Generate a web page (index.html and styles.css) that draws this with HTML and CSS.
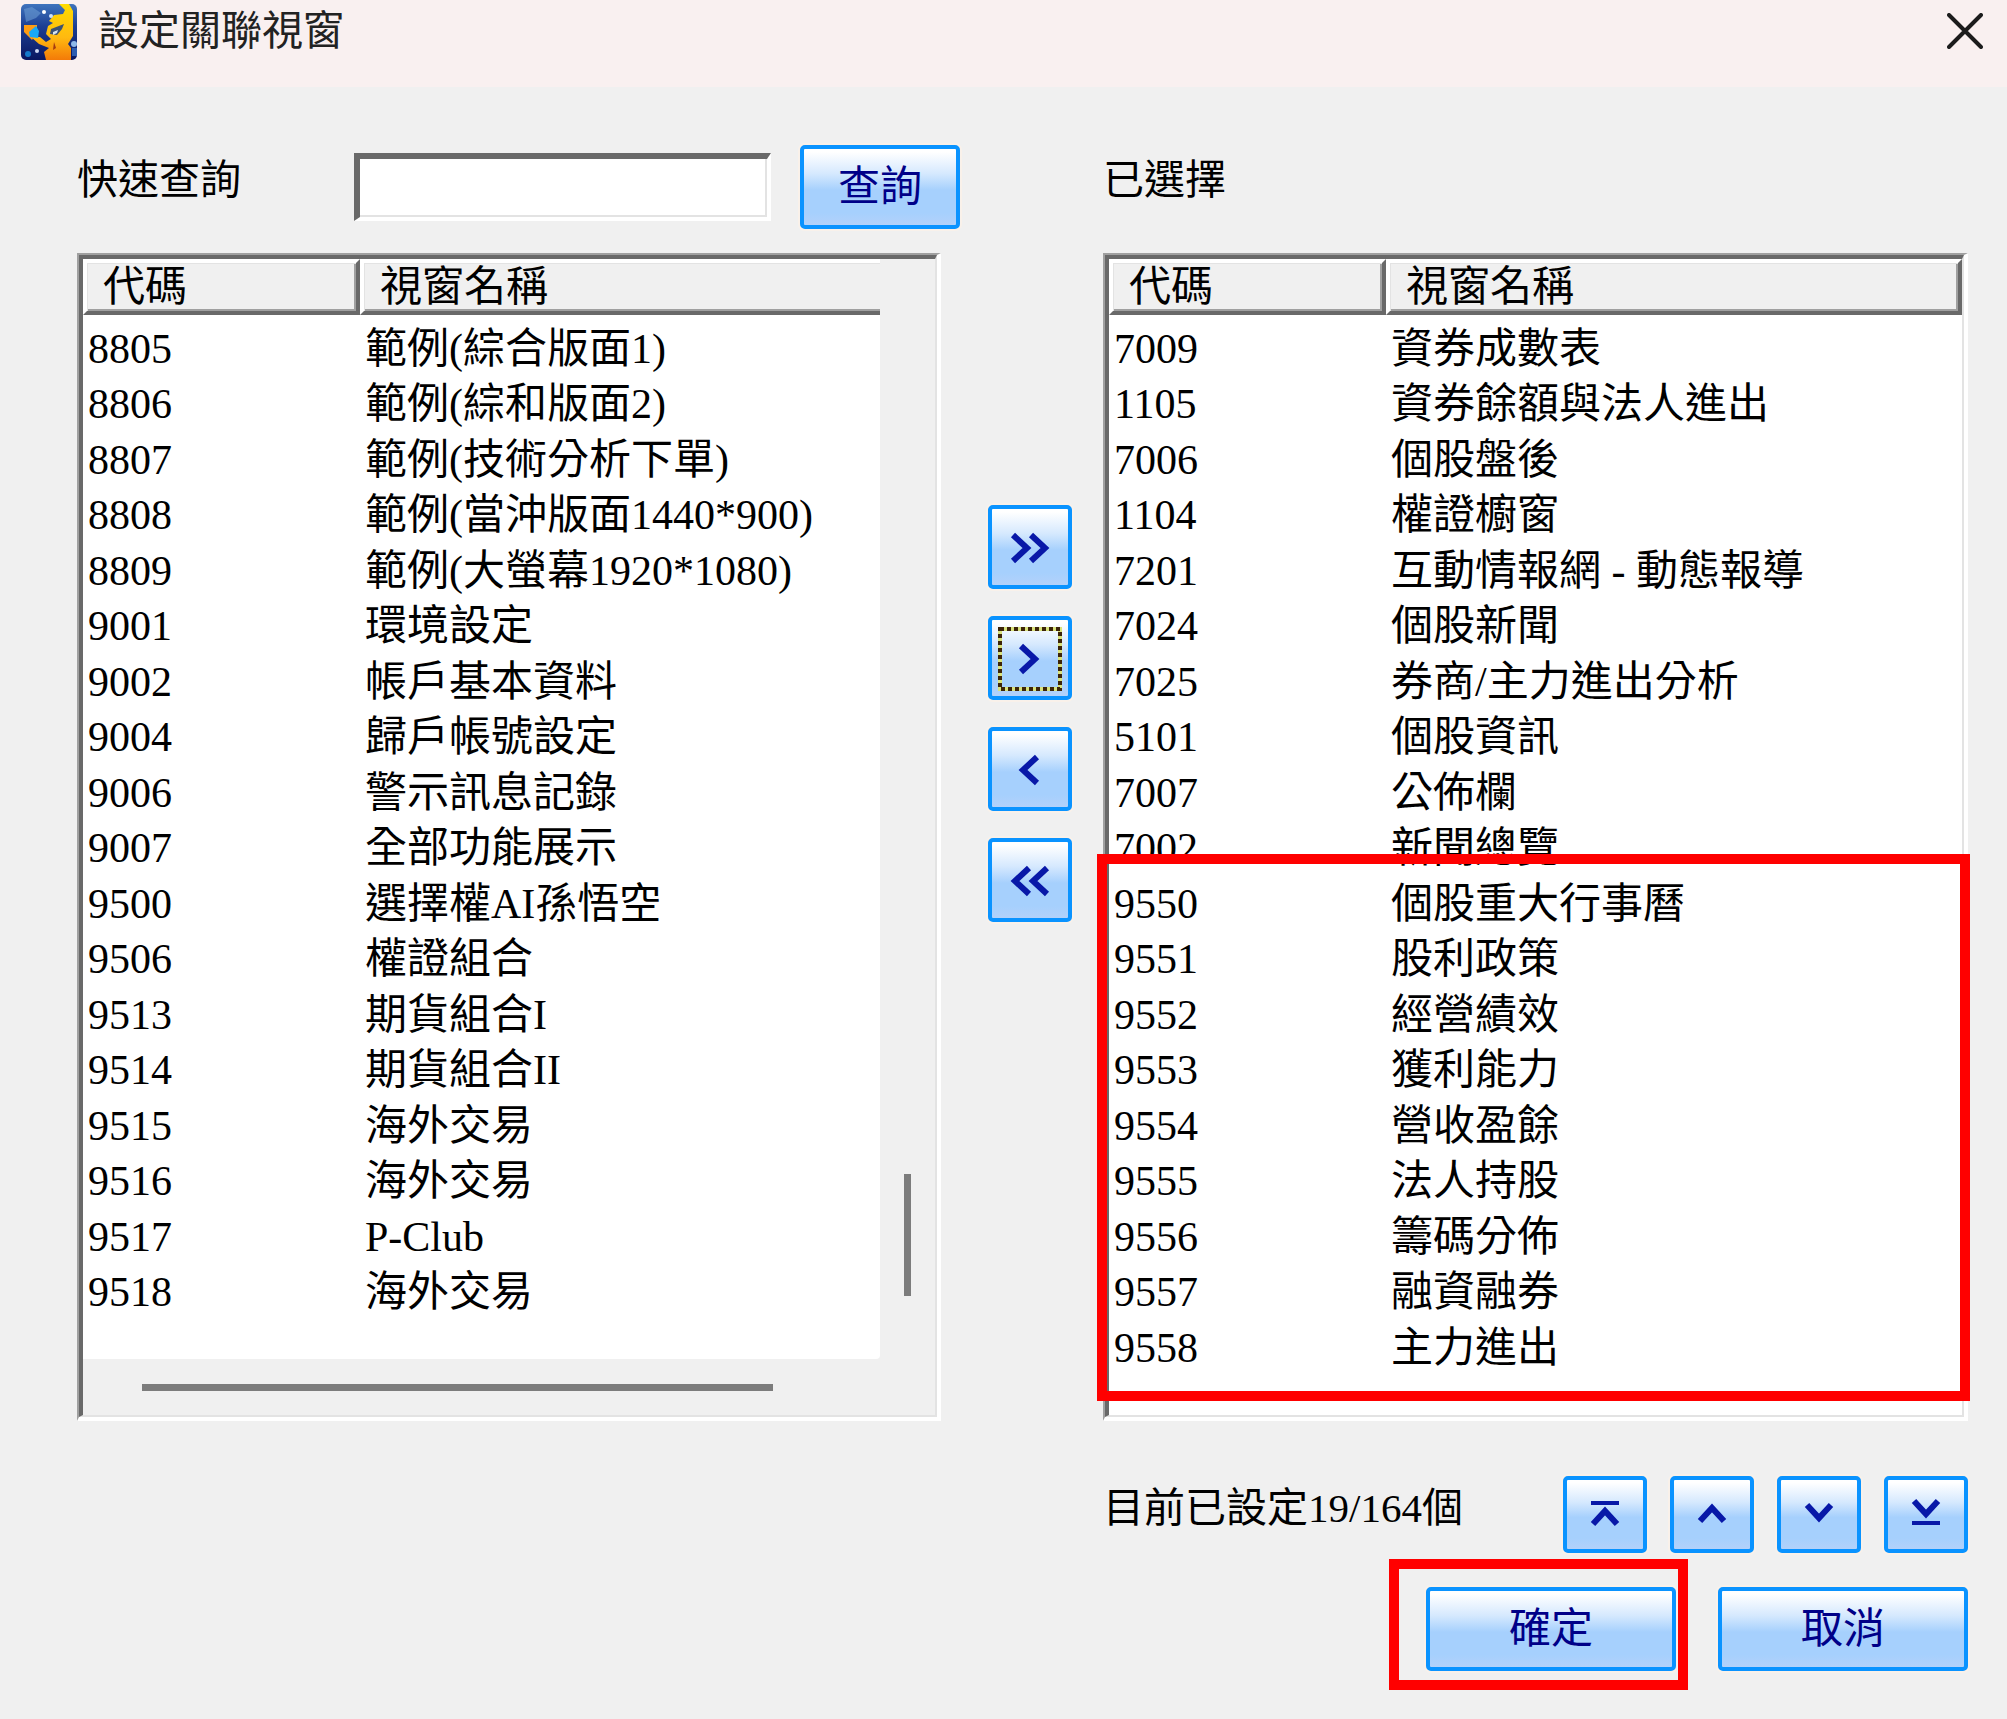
FILE: index.html
```html
<!DOCTYPE html>
<html lang="zh-Hant">
<head>
    <meta charset="UTF-8">
    <meta name="viewport" content="width=device-width, initial-scale=1.0">
    <title>設定關聯視窗</title>
    <link rel="stylesheet" href="styles.css">
</head>
<body>
<header class="titlebar">
    <svg class="app-icon" viewBox="0 0 56 56" aria-hidden="true">
        <defs>
            <linearGradient id="sky" x1="0" y1="0" x2="0" y2="1">
                <stop offset="0" stop-color="#3f74bd"/>
                <stop offset="0.4" stop-color="#1c3f93"/>
                <stop offset="1" stop-color="#0a1660"/>
            </linearGradient>
            <linearGradient id="moon" x1="0" y1="0" x2="0" y2="1">
                <stop offset="0" stop-color="#ffdc00"/>
                <stop offset="0.6" stop-color="#ffb910"/>
                <stop offset="1" stop-color="#f47a08"/>
            </linearGradient>
        </defs>
        <rect width="56" height="56" rx="5" fill="url(#sky)"/>
        <path d="M3 5l8-2 9 6-5 5-10 4z" fill="#6b9bd2" opacity="0.6"/>
        <path d="M38 0h10l4 7v25l-5 8 3 4v12H25l-2-8 5-4-10-4-8-7h9l6 5 5-3-5-5 2-8 5-3-4-2 5-6 9-1 2-4z" fill="url(#moon)"/>
        <path d="M3 21h13v7l-5 8-8-8z" fill="#ff9c12"/>
        <path d="M15 22l3 5-1 7-8-1-1-5z" fill="#19a9f5"/>
        <path d="M30 25l13-5-2 5-5 6-7-1z" fill="#3d5272"/>
        <path d="M32 28l5-2-1 3-4 2z" fill="#d5e4f0"/>
        <path d="M33 38l2 6-3 2z" fill="#a33b10"/>
        <circle cx="23" cy="8" r="2" fill="#fff"/>
        <circle cx="30" cy="12" r="2" fill="#cfe2f8"/>
        <circle cx="16" cy="47" r="2" fill="#cfd8f2"/>
        <circle cx="53" cy="40" r="3" fill="#8fb8e8"/>
        <path d="M51 44h5v8h-5z" fill="#2c5cb0"/>
        <circle cx="7" cy="50" r="3" fill="#157acb"/>
    </svg>
    <h1 class="title">設定關聯視窗</h1>
    <button class="close" type="button" aria-label="關閉">
        <svg viewBox="0 0 36 36"><path d="M2 2l32 32M34 2L2 34"/></svg>
    </button>
</header>

<main class="dialog">
    <form class="head" onsubmit="return false">
        <label class="label" for="query">快速查詢</label>
        <input class="query" id="query" type="text">
        <button class="btn search" type="submit">查詢</button>
    </form>
    <h2 class="label selected-label">已選擇</h2>

    <section class="list available">
        <div class="list-inner">
            <div class="rows">
                <table>
                    <thead>
                    <tr><th class="code">代碼</th><th>視窗名稱</th></tr>
                    </thead>
                    <tbody>
                    <tr><td>8805</td><td>範例(綜合版面1)</td></tr>
                    <tr><td>8806</td><td>範例(綜和版面2)</td></tr>
                    <tr><td>8807</td><td>範例(技術分析下單)</td></tr>
                    <tr><td>8808</td><td>範例(當沖版面1440*900)</td></tr>
                    <tr><td>8809</td><td>範例(大螢幕1920*1080)</td></tr>
                    <tr><td>9001</td><td>環境設定</td></tr>
                    <tr><td>9002</td><td>帳戶基本資料</td></tr>
                    <tr><td>9004</td><td>歸戶帳號設定</td></tr>
                    <tr><td>9006</td><td>警示訊息記錄</td></tr>
                    <tr><td>9007</td><td>全部功能展示</td></tr>
                    <tr><td>9500</td><td>選擇權AI孫悟空</td></tr>
                    <tr><td>9506</td><td>權證組合</td></tr>
                    <tr><td>9513</td><td>期貨組合I</td></tr>
                    <tr><td>9514</td><td>期貨組合II</td></tr>
                    <tr><td>9515</td><td>海外交易</td></tr>
                    <tr><td>9516</td><td>海外交易</td></tr>
                    <tr><td>9517</td><td>P-Club</td></tr>
                    <tr><td>9518</td><td>海外交易</td></tr>
                    </tbody>
                </table>
            </div>
            <div class="vscroll"><div class="vthumb"></div></div>
            <div class="hscroll"><div class="hthumb"></div></div>
        </div>
    </section>

    <div class="transfer">
        <button class="btn icon-btn" type="button" aria-label="全部加入">
            <svg viewBox="0 0 76 76"><path d="M21 26l14 13-14 13M39 26l14 13-14 13"/></svg>
        </button>
        <button class="btn icon-btn" type="button" aria-label="加入">
            <svg viewBox="0 0 76 76">
                <rect class="focus-base" x="8" y="9" width="60" height="60"/>
                <rect class="focus-dots" x="8" y="9" width="60" height="60"/>
                <path d="M29 26l14 13-14 13"/>
            </svg>
        </button>
        <button class="btn icon-btn" type="button" aria-label="移除">
            <svg viewBox="0 0 76 76"><path d="M45 26L31 39l14 13"/></svg>
        </button>
        <button class="btn icon-btn" type="button" aria-label="全部移除">
            <svg viewBox="0 0 76 76"><path d="M37 26L23 39l14 13M55 26L41 39l14 13"/></svg>
        </button>
    </div>

    <section class="list chosen">
        <div class="list-inner">
            <div class="rows">
                <table>
                    <thead>
                    <tr><th class="code">代碼</th><th>視窗名稱</th></tr>
                    </thead>
                    <tbody>
                    <tr><td>7009</td><td>資券成數表</td></tr>
                    <tr><td>1105</td><td>資券餘額與法人進出</td></tr>
                    <tr><td>7006</td><td>個股盤後</td></tr>
                    <tr><td>1104</td><td>權證櫥窗</td></tr>
                    <tr><td>7201</td><td>互動情報網 - 動態報導</td></tr>
                    <tr><td>7024</td><td>個股新聞</td></tr>
                    <tr><td>7025</td><td>券商/主力進出分析</td></tr>
                    <tr><td>5101</td><td>個股資訊</td></tr>
                    <tr><td>7007</td><td>公佈欄</td></tr>
                    <tr><td>7002</td><td>新聞總覽</td></tr>
                    <tr><td>9550</td><td>個股重大行事曆</td></tr>
                    <tr><td>9551</td><td>股利政策</td></tr>
                    <tr><td>9552</td><td>經營績效</td></tr>
                    <tr><td>9553</td><td>獲利能力</td></tr>
                    <tr><td>9554</td><td>營收盈餘</td></tr>
                    <tr><td>9555</td><td>法人持股</td></tr>
                    <tr><td>9556</td><td>籌碼分佈</td></tr>
                    <tr><td>9557</td><td>融資融券</td></tr>
                    <tr><td>9558</td><td>主力進出</td></tr>
                    </tbody>
                </table>
            </div>
        </div>
        <div class="mark mark-rows"></div>
    </section>

    <footer class="foot">
        <div class="order">
            <p class="label count">目前已設定19/164個</p>
            <button class="btn icon-btn" type="button" aria-label="移到最上">
                <svg viewBox="0 0 76 69"><path d="M26 44l12-13 12 13"/><path class="bar" d="M24 23h28"/></svg>
            </button>
            <button class="btn icon-btn" type="button" aria-label="上移">
                <svg viewBox="0 0 76 69"><path d="M26 41l12-13 12 13"/></svg>
            </button>
            <button class="btn icon-btn" type="button" aria-label="下移">
                <svg viewBox="0 0 76 69"><path d="M26 25l12 13 12-13"/></svg>
            </button>
            <button class="btn icon-btn" type="button" aria-label="移到最下">
                <svg viewBox="0 0 76 69"><path d="M26 21l12 13 12-13"/><path class="bar" d="M24 43h28"/></svg>
            </button>
        </div>
        <div class="actions">
            <div class="ok">
                <button class="btn wide" type="button">確定</button>
                <div class="mark mark-ok"></div>
            </div>
            <button class="btn wide" type="button">取消</button>
        </div>
    </footer>
</main>
</body>
</html>
```

FILE: styles.css
```css
* {
    box-sizing: border-box;
}

body {
    margin: 0;
    min-height: 100vh;
    background-color: #f0f0f0;
    color: #000;
    font-family: "Liberation Serif", "Noto Sans CJK TC", serif;
    font-size: 42px;
    line-height: 54px;
}

button,
input {
    font: inherit;
}

/* title bar */
.titlebar {
    display: flex;
    align-items: flex-start;
    height: 87px;
    padding: 4px 24px 0 21px;
    background-color: #f9f0f0;
}

.app-icon {
    width: 56px;
    height: 56px;
}

.title {
    flex: 1;
    margin: 0 0 0 21px;
    font-size: 41px;
    font-weight: normal;
    color: #222;
}

.close {
    width: 36px;
    height: 36px;
    margin-top: 9px;
    padding: 0;
    border: none;
    background: none;
    cursor: pointer;
}

.close svg {
    display: block;
    stroke: #1c1c1c;
    stroke-width: 4;
    stroke-linecap: round;
}

/* dialog */
.dialog {
    display: grid;
    grid-template-columns: minmax(0, 883fr) 143px minmax(0, 865fr);
    padding: 58px 39px 48px 77px;
}

.head {
    display: flex;
    align-items: center;
    height: 84px;
    margin-bottom: 24px;
}

.label {
    margin: 0 0 14px;
    font-size: 41px;
    font-weight: normal;
    white-space: nowrap;
}

.head .label {
    width: 277px;
}

.selected-label {
    grid-column: 3;
    margin-top: 8px;
}

.query {
    flex: 1;
    min-width: 0;
    height: 68px;
    padding: 0 8px;
    border: solid;
    border-width: 6px 4px 4px 6px;
    border-color: #696969 #fff #fff #696969;
    background-color: #fff;
    box-shadow: inset -2px -2px #e3e3e3;
}

/* buttons */
.btn {
    height: 84px;
    padding: 0;
    border: 4px solid #0a93ff;
    border-radius: 5px;
    background: linear-gradient(#fff 4%, #d6e9fe 32%, #a6d0fd 54%, #a6d0fd 84%, #b3d1fa);
    box-shadow: 0 0 0 2px #f9f1ea;
    color: #000088;
    cursor: pointer;
}

.search {
    width: 160px;
    margin-left: 29px;
}

.wide {
    width: 250px;
}

.icon-btn {
    width: 84px;
}

.icon-btn svg {
    display: block;
    fill: none;
    stroke: #0818a8;
    stroke-width: 6;
}

.icon-btn .bar {
    stroke-width: 4;
}

.icon-btn .focus-base {
    stroke: #d9e27c;
    stroke-width: 4;
}

.icon-btn .focus-dots {
    stroke: #3c2408;
    stroke-width: 4;
    stroke-dasharray: 4 3;
}

/* lists */
.list {
    position: relative;
    border: solid;
    border-width: 2px 4px 4px 2px;
    border-color: #a0a0a0 #fff #fff #a0a0a0;
}

.available {
    margin-right: 19px;
}

.list-inner {
    height: 100%;
    border: solid;
    border-width: 4px 2px 2px 4px;
    border-color: #696969 #e3e3e3 #e3e3e3 #696969;
}

.available .list-inner {
    display: grid;
    grid-template-columns: 1fr 55px;
    grid-template-rows: 1fr 56px;
}

.rows {
    background-color: #fff;
}

.available .rows {
    padding-bottom: 39px;
    border-bottom-right-radius: 4px;
}

.chosen .rows {
    padding-bottom: 40px;
}

table {
    width: 100%;
    table-layout: fixed;
    border-spacing: 0;
}

th {
    height: 56px;
    padding: 0 0 0 16px;
    border: solid;
    border-width: 4px;
    border-color: #fff #696969 #696969 #fff;
    background-color: #f0f0f0;
    box-shadow: inset 1px 1px #e3e3e3, inset -2px -2px #a0a0a0;
    font-weight: normal;
    text-align: left;
    line-height: 40px;
}

.code {
    width: 277px;
}

.available th:last-child {
    border-right: none;
    box-shadow: inset 1px 1px #e3e3e3, inset 0 -2px #a0a0a0;
}

tbody::before {
    content: "";
    display: block;
    height: 6px;
}

td {
    height: 55px;
    padding: 0 0 0 5px;
    white-space: nowrap;
}

tr:nth-child(even) td {
    height: 56px;
}

/* scroll bars */
.vscroll {
    display: flex;
    justify-content: center;
    align-items: flex-end;
    padding-bottom: 63px;
}

.vthumb {
    width: 7px;
    height: 122px;
    background-color: #7c7c7c;
}

.hscroll {
    grid-column: 1 / 3;
    display: flex;
    align-items: center;
    padding: 0 162px 0 59px;
}

.hthumb {
    flex: 1;
    height: 7px;
    background-color: #7c7c7c;
}

.transfer {
    display: flex;
    flex-direction: column;
    align-items: flex-start;
    gap: 27px;
    padding: 252px 0 0 28px;
}

/* footer */
.foot {
    grid-column: 3;
    margin-top: 55px;
}

.order {
    display: flex;
    align-items: center;
    gap: 23px;
}

.order .icon-btn {
    height: 77px;
}

.count {
    flex: 1;
}

.actions {
    display: flex;
    justify-content: flex-end;
    gap: 42px;
    margin-top: 34px;
}

.ok {
    position: relative;
}

/* red frames over the dialog */
.mark {
    position: absolute;
    border: 10px solid #f00;
    pointer-events: none;
}

.mark-rows {
    top: 599px;
    right: -6px;
    bottom: 16px;
    left: -8px;
}

.mark-ok {
    top: -28px;
    right: -12px;
    bottom: -19px;
    left: -37px;
}
```
